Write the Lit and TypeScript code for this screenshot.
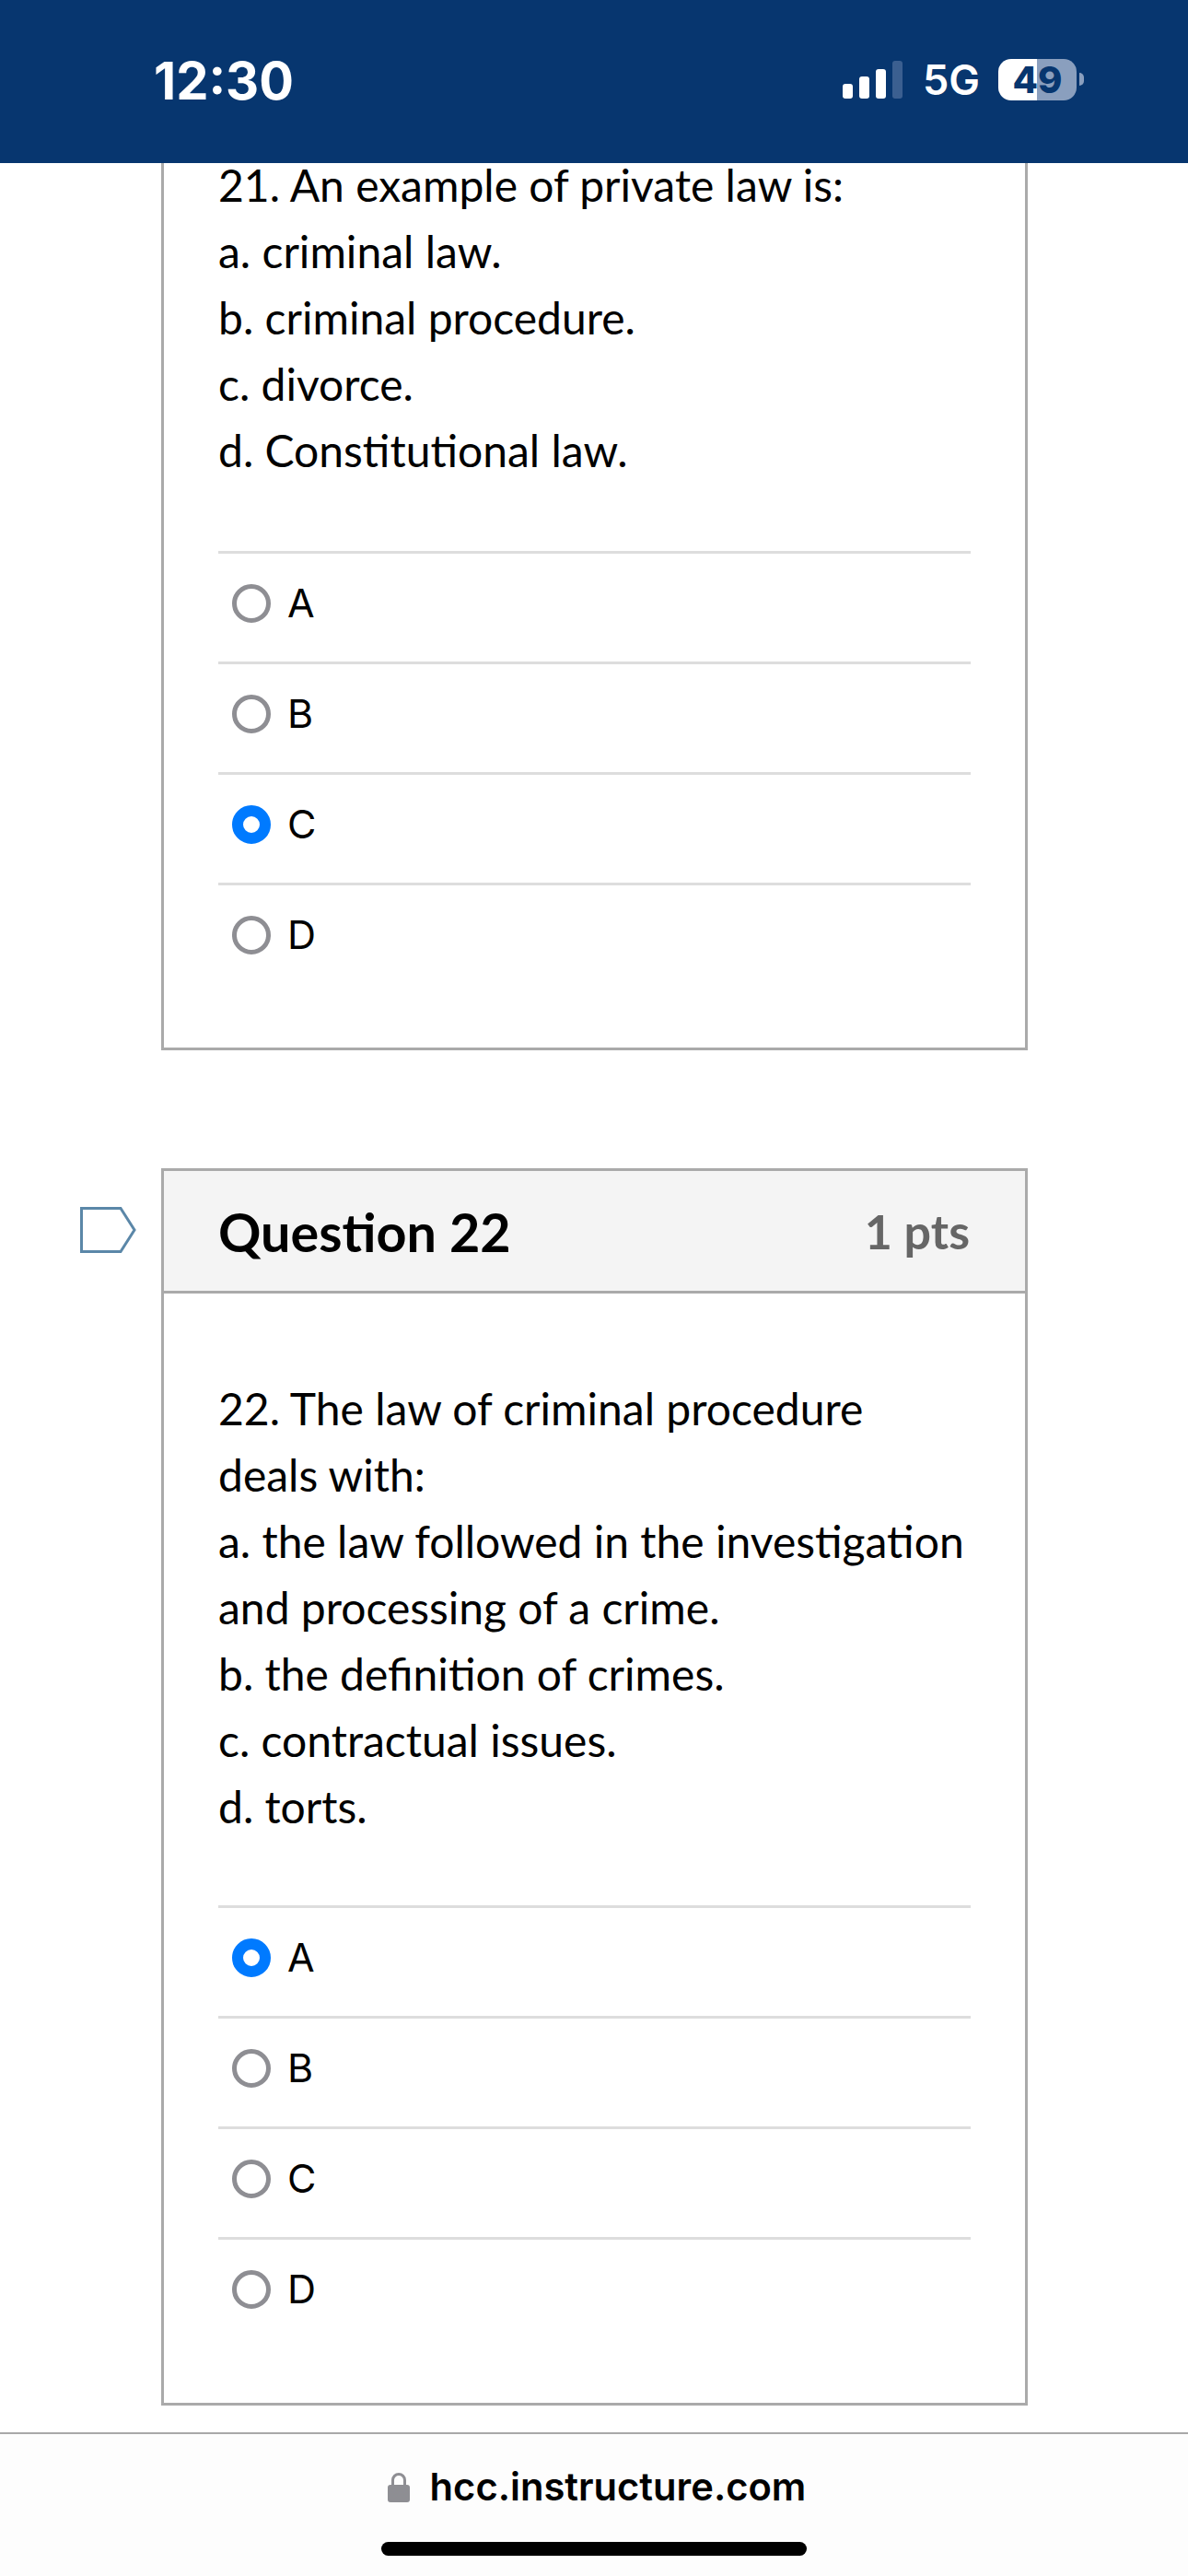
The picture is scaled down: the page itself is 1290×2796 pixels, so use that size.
import { LitElement, html, css } from "lit";
import { customElement } from "lit/decorators.js";

interface Q { lines: string[]; selected: string; title?: string; }

const QUESTIONS: Q[] = [
  {
    lines: ["21. An example of private law is:", "a. criminal law.", "b. criminal procedure.", "c. divorce.", "d. Constitutional law."],
    selected: "C",
  },
  {
    title: "Question 22",
    lines: [
      "22. The law of criminal procedure", "deals with:", "a. the law followed in the investigation",
      "and processing of a crime.", "b. the definition of crimes.", "c. contractual issues.", "d. torts.",
    ],
    selected: "A",
  },
];

@customElement("app-root")
export class AppRoot extends LitElement {
  static styles = css`
    :host { display: flex; flex-direction: column; width: 1290px; height: 2796px; background: #fff; overflow: hidden; font-family: Lato, "Noto Sans", sans-serif; color: #000; }
    .status { flex: none; height: 177px; background: #07366f; position: relative; z-index: 2; display: flex; align-items: center; padding: 0 121px 0 167px; box-sizing: border-box; color: #fff; font-family: Inter, "Liberation Sans", sans-serif; }
    .time { font-size: 56px; font-weight: 700; line-height: 1; margin-top: -1px; letter-spacing: 0; }
    .right { margin-left: auto; display: flex; align-items: center; margin-top: -4px; }
    .signal { display: flex; align-items: flex-end; gap: 7px; height: 41px; }
    .signal i { display: block; width: 11px; background: #fff; border-radius: 3px; }
    .signal i.off { background: #3b5f90; }
    .net { font-size: 45px; font-weight: 600; line-height: 1; margin-left: 22px; }
    .battery { margin-left: 20px; width: 85px; height: 45px; border-radius: 14px; background: linear-gradient(90deg, #fff 0 42px, #8a9fbe 42px); color: #07366f; font-size: 40px; font-weight: 800; line-height: 45px; text-align: center; position: relative; }
    .battery::after { content: ""; position: absolute; left: 88px; top: 15px; width: 5px; height: 14px; border-radius: 0 5px 5px 0; background: #8a9fbe; }
    main { flex: 1; min-height: 0; overflow: hidden; display: flex; flex-direction: column; gap: 128px; margin-top: -12px; }
    .card { flex: none; position: relative; margin-left: 175px; width: 941px; box-sizing: border-box; border: 3px solid #aaa; border-top: none; padding-bottom: 59px; }
    .card.titled { border-top: 3px solid #aaa; padding-bottom: 60px; }
    .flag { position: absolute; left: -91px; top: 39px; width: 62px; height: 50px; }
    .head { height: 133px; box-sizing: border-box; border-bottom: 3px solid #aaa; background: #f4f4f4; display: flex; align-items: center; justify-content: space-between; padding: 0 60px 0 59px; }
    .head h2 { margin: 0; font-size: 57.5px; font-weight: 700; }
    .head span { font-size: 52px; font-weight: 700; color: #666; }
    .text { padding: 0 59px; }
    .titled .text { padding-top: 89px; }
    .text p { margin: 0; font-size: 48px; line-height: 72px; }
    .answers { margin: 73px 59px 0; }
    .titled .answers { margin-top: 71px; }
    .answer { height: 120px; box-sizing: border-box; border-top: 3px solid #ddd; display: flex; align-items: center; padding: 0 0 9px 15px; gap: 18px; font-family: Inter, "Liberation Sans", sans-serif; font-size: 43px; }
    .label { margin-top: -2px; }
    .radio { width: 42px; height: 42px; box-sizing: border-box; border-radius: 50%; border: 5px solid #8e8e93; }
    .radio.on { border: 12px solid #007aff; }
    footer { flex: none; height: 156px; box-sizing: border-box; border-top: 2px solid #a8a8a8; background: #fdfdfd; display: flex; flex-direction: column; align-items: center; }
    .url { display: flex; align-items: center; gap: 22px; height: 60px; margin: 27px 0 0 6px; font-family: Inter, "Liberation Sans", sans-serif; font-size: 41.7px; font-weight: 600; }
    .lock { width: 24px; height: 32px; margin-top: 2px; }
    .home { width: 462px; height: 15px; border-radius: 8px; background: #000; margin-top: 30px; }
  `;

  private card(q: Q) {
    return html`<section class="card ${q.title ? "titled" : ""}">
      ${q.title ? html`
        <svg class="flag" viewBox="0 0 62 50"><path d="M1.5 1.5H44L59 25L44 48.5H1.5Z" fill="#fff" stroke="#5b87a8" stroke-width="3"/></svg>
        <div class="head"><h2>${q.title}</h2><span>1 pts</span></div>` : ""}
      <div class="text">${q.lines.map((l) => html`<p>${l}</p>`)}</div>
      <div class="answers">
        ${["A", "B", "C", "D"].map((a) => html`<div class="answer"><div class="radio ${a === q.selected ? "on" : ""}"></div><span class="label">${a}</span></div>`)}
      </div>
    </section>`;
  }

  render() {
    return html`
      <div class="status">
        <div class="time">12:30</div>
        <div class="right">
          <div class="signal">
            <i style="height:16px"></i><i style="height:24px"></i><i style="height:32px"></i><i class="off" style="height:41px"></i>
          </div>
          <div class="net">5G</div>
          <div class="battery">49</div>
        </div>
      </div>
      <main>${QUESTIONS.map((q) => this.card(q))}</main>
      <footer>
        <div class="url">
          <svg class="lock" viewBox="0 0 24 32"><path d="M5.5 15V8a6.5 6.5 0 0 1 13 0v7" fill="none" stroke="#8e8e93" stroke-width="3"/><rect x="0" y="13" width="24" height="19" rx="3" fill="#8e8e93"/></svg>
          hcc.instructure.com
        </div>
        <div class="home"></div>
      </footer>
    `;
  }
}
